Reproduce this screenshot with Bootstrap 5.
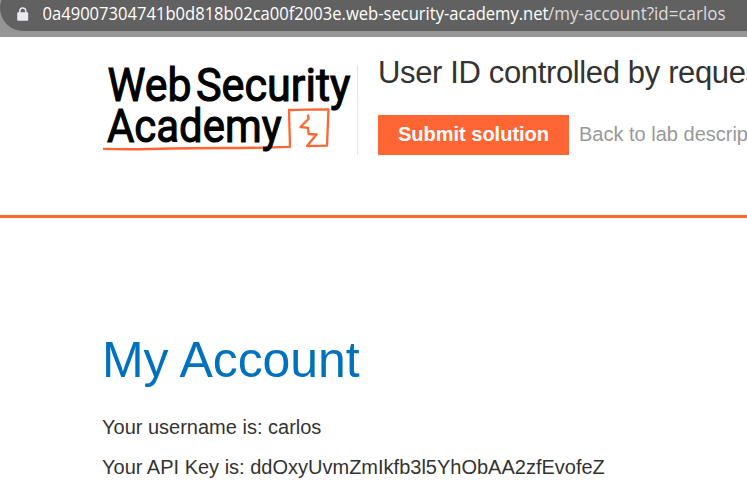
<!DOCTYPE html>
<html lang="en">
<head>
<meta charset="utf-8">
<meta name="viewport" content="width=device-width, initial-scale=1">
<title>User ID controlled by request parameter</title>
<link href="https://cdn.jsdelivr.net/npm/bootstrap@5.3.0/dist/css/bootstrap.min.css" rel="stylesheet">
<style>
body { font-family: "Liberation Sans", Arial, sans-serif; font-size: 20px; color: #333332; height: 491px; }
.browser-bar { height: 37px; background: #959595; }
.address { height: 46px; margin-top: -15px; background: #616161; border-radius: 23px 0 0 23px; padding: 15px 0 0 17px; }
.address svg { display: block; flex: none; }
.address text { font-family: "Open Sans", "Noto Sans", sans-serif; font-size: 18px; }
.lab-header { height: 181px; padding: 28px 0 0 102px; border-bottom: 3px solid #ff6633; }
.logo { width: 256px; height: 90px; border-right: 1px solid #e4e4e4; }
.logo svg { display: block; overflow: visible; }
.logo text { font-family: Roboto, sans-serif; font-weight: 400; font-size: 47px; stroke: #000; stroke-width: 1.1px; }
.lab-info { width: 369px; }
.lab-title { font-size: 31px; line-height: 36px; margin: -10px 0 24px; letter-spacing: -.36px; }
.btn-submit { width: 191px; height: 40px; background: #ff6633; color: #fff; font-size: 20px; font-weight: 700; line-height: 38px; padding: 0 0 2px; border: 0; border-radius: 0; }
.back-link { color: #999; margin-left: 10px; line-height: 38px; }
.account { padding: 113px 0 0 102px; }
.account h1 { font-size: 50px; line-height: 58px; color: #0071bc; margin-bottom: 23px; letter-spacing: -.1px; }
.account p { line-height: 30px; margin-bottom: 10px; }
</style>
</head>
<body class="bg-white overflow-hidden">
<div class="browser-bar overflow-hidden">
  <div class="address d-flex">
    <svg width="730" height="31" viewBox="17 0 730 31">
      <path d="M19.8 13v-2a3 3 0 0 1 6 0v2" fill="none" stroke="#e8eaed" stroke-width="1.5"/>
      <rect x="17.2" y="12.2" width="11" height="8.6" rx="1" fill="#e8eaed"/>
      <text x="42.5" y="20" fill="#fff" textLength="506" lengthAdjust="spacingAndGlyphs">0a49007304741b0d818b02ca00f2003e.web-security-academy.net</text>
      <text x="548" y="20" fill="#dcdcdc" textLength="177.5" lengthAdjust="spacingAndGlyphs">/my-account?id=carlos</text>
    </svg>
  </div>
</div>
<header class="lab-header d-flex">
  <div class="logo flex-shrink-0">
    <svg width="255" height="90" viewBox="102 65 255 90" role="img" aria-label="Web Security Academy">
      <path d="M103 148.800Q125 149.600 150 149Q195 148 225 148Q260 148 290 146.800L289 110Q306 109.500 328.500 109.300L327 145.600Q319 145.800 307 146L316.500 134.500L308.600 134L308 127.800L300.500 127L308.500 119L308 114.500" fill="none" stroke="#ff6633" stroke-width="2.300" stroke-linejoin="round"/>
      <path d="M102.500 148.400Q125 151 165 149Q125 148 102.500 148.400" fill="#ff6633"/>
      <text x="107.500" y="101" textLength="84" lengthAdjust="spacingAndGlyphs">Web</text>
      <text x="196" y="101" textLength="154.500" lengthAdjust="spacingAndGlyphs">Security</text>
      <text x="107" y="141.500" textLength="174.500" lengthAdjust="spacingAndGlyphs">Academy</text>
    </svg>
  </div>
  <div class="lab-info flex-shrink-0 ms-3 ps-1 text-nowrap overflow-visible">
    <h2 class="lab-title fw-normal">User ID controlled by request parameter</h2>
    <div class="d-flex">
      <button type="button" class="btn btn-submit flex-shrink-0">Submit solution</button>
      <a href="#" class="back-link text-decoration-none">Back to lab description</a>
    </div>
  </div>
</header>
<main class="account">
  <h1 class="fw-normal">My Account</h1>
  <p>Your username is: carlos</p>
  <p>Your API Key is: ddOxyUvmZmIkfb3l5YhObAA2zfEvofeZ</p>
</main>
<script src="https://cdn.jsdelivr.net/npm/bootstrap@5.3.0/dist/js/bootstrap.bundle.min.js"></script>
</body>
</html>
